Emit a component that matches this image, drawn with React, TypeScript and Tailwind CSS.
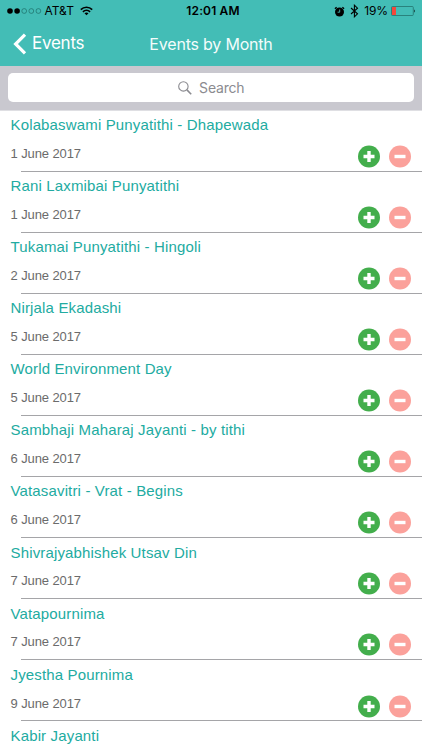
interface EventItem {
    title: string;
    date: string;
}

const events: EventItem[] = [
    { title: 'Kolabaswami Punyatithi - Dhapewada', date: '1 June 2017' },
    { title: 'Rani Laxmibai Punyatithi', date: '1 June 2017' },
    { title: 'Tukamai Punyatithi - Hingoli', date: '2 June 2017' },
    { title: 'Nirjala Ekadashi', date: '5 June 2017' },
    { title: 'World Environment Day', date: '5 June 2017' },
    { title: 'Sambhaji Maharaj Jayanti - by tithi', date: '6 June 2017' },
    { title: 'Vatasavitri - Vrat - Begins', date: '6 June 2017' },
    { title: 'Shivrajyabhishek Utsav Din', date: '7 June 2017' },
    { title: 'Vatapournima', date: '7 June 2017' },
    { title: 'Jyestha Pournima', date: '9 June 2017' },
];

const StatusBar = () => {
    return (
        <div className="grid h-[22px] grid-cols-3 items-center text-black">
            <div className="flex items-center pl-[7px]">
                <svg width="35" height="6" viewBox="0 0 35 6">
                    <circle cx="3" cy="3" r="2.8" />
                    <circle cx="10.1" cy="3" r="2.8" />
                    <circle cx="17.2" cy="3" r="2.4" fill="none" stroke="#17615c" strokeWidth="0.6" />
                    <circle cx="24.3" cy="3" r="2.4" fill="none" stroke="#17615c" strokeWidth="0.6" />
                    <circle cx="31.4" cy="3" r="2.4" fill="none" stroke="#17615c" strokeWidth="0.6" />
                </svg>
                <span className="ml-[2.5px] text-[12px] leading-none whitespace-nowrap">AT&amp;T</span>
                <svg className="ml-[6px]" width="13" height="10" viewBox="0 0 13 10" fill="none" stroke="black">
                    <path d="M0.8 3.6C4 0.4 9 0.4 12.2 3.6" strokeWidth="1.6" />
                    <path d="M2.9 5.8C5 3.8 8 3.8 10.1 5.8" strokeWidth="1.6" />
                    <path d="M6.5 9.3L4.5 7.3C5.6 6.3 7.4 6.3 8.5 7.3Z" fill="black" stroke="none" />
                </svg>
            </div>
            <span className="pl-[4px] text-center text-[12px] leading-none font-semibold tracking-[0.15px]">12:01 AM</span>
            <div className="flex items-center justify-end pr-[6px]">
                <svg width="11" height="11" viewBox="0 0 11 11">
                    <circle cx="5.5" cy="6" r="4.5" />
                    <path d="M0.9 2.8L2.6 1.2M10.1 2.8L8.4 1.2" stroke="black" strokeWidth="1.3" />
                    <path d="M5.7 3.5V6.2H3.6" fill="none" stroke="#43bdb6" strokeWidth="0.9" />
                </svg>
                <svg className="ml-[5px]" width="9" height="14" viewBox="0 0 9 14" fill="none" stroke="black" strokeWidth="1.1">
                    <path d="M1 4L7.5 9.8L4.4 12.8V1.2L7.5 4.2L1 10" />
                </svg>
                <span className="ml-[5.5px] text-[12px] leading-none tracking-[-0.1px]">19%</span>
                <svg className="ml-[3px]" width="25" height="10" viewBox="0 0 25 10">
                    <rect x="0.5" y="0.5" width="21.8" height="9" rx="1" fill="none" stroke="#23746f" strokeWidth="0.8" />
                    <path d="M1 1H5V9H1Z" fill="#f3483c" />
                    <path d="M23.3 3.3Q24.8 5 23.3 6.7Z" />
                </svg>
            </div>
        </div>
    );
};

const Header = () => {
    return (
        <header className="h-[66px] bg-[#43bdb6] font-['Inter','Liberation_Sans',sans-serif]">
            <StatusBar />
            <div className="grid h-[43px] grid-cols-[1fr_auto_1fr] items-center text-white">
                <button className="flex items-center pl-[12.5px]">
                    <svg width="14" height="22" viewBox="0 0 14 22" fill="none" stroke="white" strokeWidth="3.2">
                        <path d="M12 1.6L2.6 11L12 20.4" />
                    </svg>
                    <span className="ml-[5.5px] text-[17px] leading-none tracking-[-0.25px]">Events</span>
                </button>
                <h1 className="text-[16px] leading-none tracking-[-0.2px] text-[#f3fcfb]">Events by Month</h1>
            </div>
        </header>
    );
};

const SearchBar = () => {
    return (
        <div className="h-[44.5px] border-b border-[#dfdfe3] bg-[#c9c8cf] px-2 pt-[7px]">
            <div className="flex h-[29px] items-center justify-center rounded-[5px] bg-white font-['Inter','Liberation_Sans',sans-serif] text-[#8b8b90]">
                <svg width="14" height="14" viewBox="0 0 14 14" fill="none" stroke="currentColor">
                    <circle cx="5.4" cy="5.4" r="4.7" strokeWidth="1.1" />
                    <path d="M8.9 8.9L13.2 13.2" strokeWidth="1.6" />
                </svg>
                <span className="ml-[7.5px] text-[14px] leading-none tracking-[-0.2px]">Search</span>
            </div>
        </div>
    );
};

const EventRow = ({ title, date }: EventItem) => {
    return (
        <li className="flex h-[61.06px] flex-col">
            <h2 className="pt-[4.7px] pl-[10.5px] text-[15px] leading-5 tracking-[0.15px] text-[#22aba1]">{title}</h2>
            <div className="flex flex-1 justify-between pr-[11px] pl-[10.5px]">
                <span className="pt-[8.9px] text-[13px] leading-5 tracking-[-0.1px] text-[#6b6b6b]">{date}</span>
                <div className="flex gap-[9px] pt-[9.9px]">
                    <svg width="22" height="23" viewBox="0 0 22 23">
                        <circle cx="11" cy="11.5" r="11" fill="#43ae4c" />
                        <path d="M11 6V17M5.5 11.5H16.5" stroke="white" strokeWidth="3.4" />
                    </svg>
                    <svg width="22" height="23" viewBox="0 0 22 23">
                        <circle cx="11" cy="11.5" r="11" fill="#fba19b" />
                        <path d="M5.5 11.5H16.5" stroke="white" strokeWidth="3.4" />
                    </svg>
                </div>
            </div>
            <div className="ml-[21px] h-px bg-[#a5a5a8]" />
        </li>
    );
};

const App = () => {
    return (
        <div className="flex h-[750px] w-[422px] flex-col overflow-hidden bg-white">
            <Header />
            <SearchBar />
            <ul className="font-['Liberation_Sans',sans-serif]">
                {events.map((event) => (
                    <EventRow key={event.title} title={event.title} date={event.date} />
                ))}
                {/* only the title of the last event fits on the screen */}
                <li className="pt-[4.7px] pl-[10.5px] text-[15px] leading-5 tracking-[0.15px] text-[#22aba1]">Kabir Jayanti</li>
            </ul>
        </div>
    );
};

export default App;
